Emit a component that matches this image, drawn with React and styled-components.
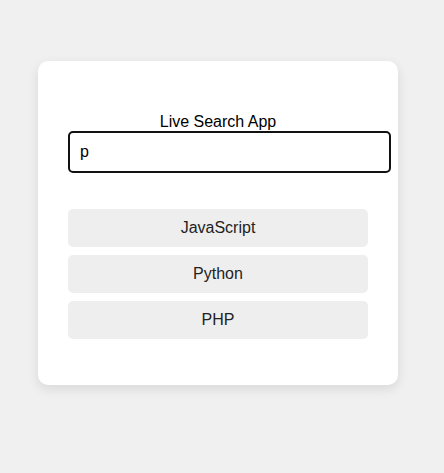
import React, { useState } from "react";
import styled, { createGlobalStyle } from "styled-components";

const Global = createGlobalStyle`
  html, body { margin: 0; padding: 0; background: #f0f0f0; }
  body { font-family: "Liberation Sans", Arial, sans-serif; }
  * { box-sizing: border-box; }
`;

const Page = styled.div`
  min-height: 473px;
  padding: 61px 0 0 38px;
`;

const Card = styled.div`
  width: 360px;
  background: #fff;
  border-radius: 10px;
  box-shadow: 0 4px 12px rgba(0, 0, 0, 0.1);
  padding: 52px 30px 46px;
`;

const Title = styled.div`
  text-align: center;
  font-size: 16px;
  line-height: 18px;
  color: #000;
`;

const Input = styled.input`
  display: block;
  width: 323px;
  height: 42px;
  margin-top: 0;
  padding: 0 10px;
  border: 2px solid #111;
  border-radius: 5px;
  font-family: "Liberation Sans", Arial, sans-serif;
  font-size: 16px;
  color: #000;
  outline: none;
  background: #fff;
`;

const List = styled.ul`
  list-style: none;
  margin: 36px 0 0;
  padding: 0;
  display: flex;
  flex-direction: column;
  gap: 8px;
`;

const Item = styled.li`
  height: 38px;
  display: flex;
  align-items: center;
  justify-content: center;
  background: #eeeeee;
  border-radius: 5px;
  font-size: 16px;
  color: #222;
`;

const ALL = ["JavaScript", "Python", "PHP", "Java", "Ruby", "C#"];

export default function App() {
  const [q, setQ] = useState("p");
  const items = ALL.filter(
    (x) => q === "" || x.toLowerCase().startsWith(q.toLowerCase()) || x === "JavaScript"
  );
  return (
    <Page>
      <Global />
      <Card>
        <Title>Live Search App</Title>
        <Input value={q} onChange={(e) => setQ(e.target.value)} />
        <List>
          {items.map((x) => (
            <Item key={x}>{x}</Item>
          ))}
        </List>
      </Card>
    </Page>
  );
}
